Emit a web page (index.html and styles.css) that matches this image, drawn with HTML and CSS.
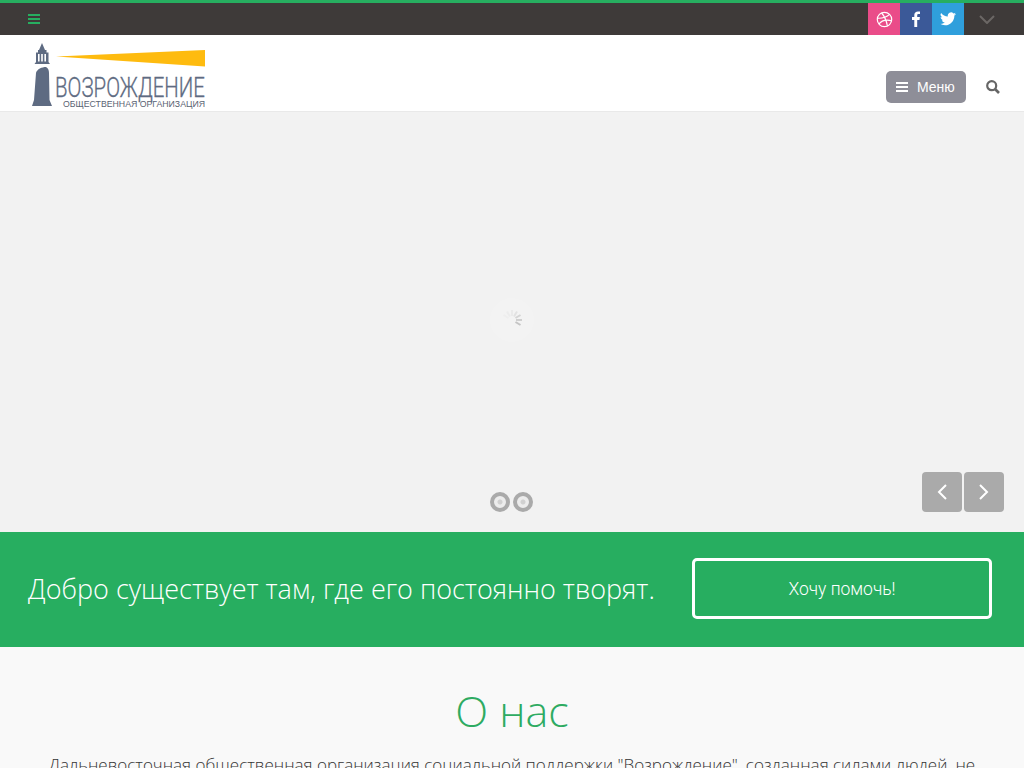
FILE: index.html
```html
<!DOCTYPE html>
<html lang="en">

<head>
    <meta charset="UTF-8">
    <meta name="viewport" content="width=device-width, initial-scale=1.0">
    <title>Возрождение</title>
    <link rel="stylesheet" href="styles.css">
</head>

<body>
    <!-- Top bar -->
    <div class="topbar">
        <svg class="top-burger" width="12" height="10" viewBox="0 0 12 10">
            <rect width="12" height="2" y="0" />
            <rect width="12" height="2" y="4" />
            <rect width="12" height="2" y="8" />
        </svg>
        <div class="socials">
            <a class="social dribbble">
                <svg width="17" height="17" viewBox="0 0 17 17" fill="none" stroke="#fff" stroke-width="1.2">
                    <circle cx="8.5" cy="8.5" r="7.2" />
                    <path d="M5.6 2C8 4.6 10.4 9.6 11.4 15" />
                    <path d="M1.4 7.2C6 7.4 10.4 6.4 13.6 3.4" />
                    <path d="M2.8 13.2C5 10 9.6 8.2 15.6 9.6" />
                </svg>
            </a>
            <a class="social facebook">
                <svg width="9" height="16" viewBox="0.7 0 9 16">
                    <path fill="#fff" d="M5.9 16V8.9h2.3l.4-2.8H5.9V4.4c0-.8.2-1.4 1.4-1.4h1.4V.5C8.4.4 7.6.4 6.700.4 4.600.4 3 1.600 3 4v2.100H.6v2.800H3V16z" />
                </svg>
            </a>
            <a class="social twitter">
                <svg width="16" height="14" viewBox="0 0 24 20">
                    <path fill="#fff" d="M24 2.400a9.800 9.800 0 0 1-2.800.8A4.900 4.900 0 0 0 23.300.5a9.800 9.800 0 0 1-3.100 1.200 4.900 4.900 0 0 0-8.400 4.500A14 14 0 0 1 1.700.9a4.900 4.900 0 0 0 1.500 6.600 4.900 4.900 0 0 1-2.200-.6c0 2.400 1.700 4.400 3.900 4.900a4.900 4.900 0 0 1-2.200.1 4.900 4.900 0 0 0 4.600 3.400A9.900 9.900 0 0 1 0 17.300 14 14 0 0 0 7.500 19.500c9.100 0 14.300-7.700 14-14.600A10 10 0 0 0 24 2.400z" />
                </svg>
            </a>
        </div>
        <svg class="top-chevron" width="16" height="9" viewBox="0 0 16 9" fill="none">
            <path d="M1 1l7 7 7-7" stroke="#6b6765" stroke-width="2" />
        </svg>
    </div>

    <!-- Header -->
    <header class="header">
        <svg class="logo" width="176" height="68" viewBox="0 0 176 68">
            <path fill="#5e6b82" d="M11 0l3 7h1.500v2.500h2v9.500l1.500 2H3.500L5 19V9.500h2V7h1z" />
            <path fill="#fff" d="M7 11h1.600v7.500H7zM10.200 11h1.600v7.500h-1.600zM13.400 11H15v7.500h-1.600z" />
            <path fill="#5e6b82" d="M5 30C6 26 11 24 15 24c2 1 3 3 3 6l.5 27 2.500 6H1l2-6z" />
            <path fill="#febb0f" d="M25 13.500L174 7v16.500z" />
            <text class="logo-name" x="24" y="54" textLength="150" lengthAdjust="spacingAndGlyphs">ВОЗРОЖДЕНИЕ</text>
            <text class="logo-sub" x="32" y="64" textLength="142" lengthAdjust="spacingAndGlyphs">ОБЩЕСТВЕННАЯ ОРГАНИЗАЦИЯ</text>
        </svg>
        <div class="header-right">
            <button class="menu-btn">
                <svg width="12" height="10" viewBox="0 0 12 10" fill="#fff">
                    <rect width="12" height="2" y="0" />
                    <rect width="12" height="2" y="4" />
                    <rect width="12" height="2" y="8" />
                </svg>
                Меню
            </button>
            <svg class="search" width="14" height="14" viewBox="0 0 14 14" fill="none" stroke="#666">
                <circle cx="5.700" cy="5.700" r="4.500" stroke-width="2.200" />
                <path d="M9 9l4 4" stroke-width="2.600" />
            </svg>
        </div>
    </header>

    <!-- Slider -->
    <div class="slider">
        <div class="loader">
            <svg width="24" height="24" viewBox="0 0 24 24" stroke-width="2">
                <path d="M12 2v6" stroke="#eaeaea" />
                <path d="M17 3.500l-3 5" stroke="#e2e2e2" />
                <path d="M20.500 7l-5 3" stroke="#d4d4d4" />
                <path d="M22 12h-6" stroke="#cfcfcf" />
                <path d="M20.500 17l-5-3" stroke="#c4c4c4" />
                <path d="M7 3.500l3 5" stroke="#ececec" />
                <path d="M3.500 7l5 3" stroke="#eeeeee" />
            </svg>
        </div>
        <div class="dots">
            <span class="dot"></span>
            <span class="dot"></span>
        </div>
        <div class="arrows">
            <a class="arrow">
                <svg width="12" height="18" viewBox="0 0 12 18" fill="none">
                    <path d="M10 2L3 9l7 7" />
                </svg>
            </a>
            <a class="arrow">
                <svg width="12" height="18" viewBox="0 0 12 18" fill="none">
                    <path d="M2 2l7 7-7 7" />
                </svg>
            </a>
        </div>
    </div>

    <!-- Call to action -->
    <div class="cta">
        <p class="cta-text">Добро существует там, где его постоянно творят.</p>
        <a class="cta-btn">Хочу помочь!</a>
    </div>

    <!-- About -->
    <section class="about">
        <h2>О нас</h2>
        <p>Дальневосточная общественная организация социальной поддержки "Возрождение", созданная силами людей, не</p>
    </section>
</body>

</html>
```

FILE: styles.css
```css
html, body {
    margin: 0;
    height: 768px;
    overflow: hidden;
}

body {
    font-family: "Open Sans", sans-serif;
    background-color: #f9f9f9;
}

.topbar {
    display: flex;
    align-items: center;
    height: 32px;
    border-top: 3px solid #27ae60;
    background-color: #3e3a39;
}

.top-burger {
    margin-left: 28px;
    fill: #27ae60;
}

.socials {
    display: flex;
    margin-left: auto;
}

.social {
    display: flex;
    align-items: center;
    justify-content: center;
    width: 32px;
    height: 32px;
}

.dribbble {
    background-color: #ea4c89;
}

.facebook {
    background-color: #3b5998;
}

.twitter {
    background-color: #2f9fdc;
}

.top-chevron {
    margin: 0 29px 0 15px;
}

.header {
    display: flex;
    justify-content: space-between;
    height: 76px;
    border-bottom: 1px solid #e9e9e9;
    background-color: #fff;
}

.logo {
    margin: 8px 0 0 31px;
}

.logo-name {
    font-family: Roboto, sans-serif;
    font-size: 27px;
    font-weight: 300;
    fill: #5e6b82;
    stroke: #5e6b82;
    stroke-width: 0.3;
}

.logo-sub {
    font-family: "Liberation Sans", sans-serif;
    font-size: 8.500px;
    fill: #5a6373;
}

.header-right {
    display: flex;
    align-items: center;
    gap: 20px;
    padding: 28px 24px 0 0;
}

.menu-btn {
    display: flex;
    align-items: center;
    gap: 9px;
    width: 80px;
    height: 32px;
    padding: 0 0 0 10px;
    border: 0;
    border-radius: 5px;
    background-color: #8e8e98;
    color: #fff;
    font-family: "Liberation Sans", sans-serif;
    font-size: 14px;
}

.slider {
    position: relative;
    height: 420px;
    background-color: #f2f2f2;
}

.loader {
    position: absolute;
    left: 490px;
    top: 186px;
    display: flex;
    align-items: center;
    justify-content: center;
    width: 44px;
    height: 44px;
    border-radius: 50%;
    background-color: rgba(255, 255, 255, 0.12);
}

.dots {
    position: absolute;
    left: 490px;
    top: 380px;
    display: flex;
    gap: 3px;
}

.dot {
    box-sizing: border-box;
    width: 20px;
    height: 20px;
    border: 4px solid #aaa;
    border-radius: 50%;
    background: radial-gradient(circle, #d0d0d0 0 2px, #ececec 3px);
}

.arrows {
    position: absolute;
    right: 20px;
    top: 360px;
    display: flex;
    gap: 2px;
}

.arrow {
    display: flex;
    align-items: center;
    justify-content: center;
    width: 40px;
    height: 40px;
    border-radius: 4px;
    background-color: #aaa;
}

.arrow path {
    stroke: #fff;
    stroke-width: 2;
}

.cta {
    display: flex;
    align-items: center;
    justify-content: space-between;
    box-sizing: border-box;
    height: 115px;
    padding: 0 32px 2px 28px;
    background-color: #27ae60;
}

.cta-text {
    margin: 0;
    color: #fff;
    font-size: 27px;
    font-weight: 300;
}

.cta-btn {
    box-sizing: border-box;
    display: flex;
    align-items: center;
    justify-content: center;
    width: 300px;
    height: 61px;
    border: 3px solid #fff;
    border-radius: 5px;
    color: #fff;
    font-family: Roboto, sans-serif;
    font-size: 17.500px;
    font-weight: 300;
}

.about {
    padding: 30px 40px 0;
    text-align: center;
}

.about h2 {
    margin: 0;
    color: #2eab62;
    font-size: 43px;
    font-weight: 300;
    line-height: 67px;
}

.about p {
    margin: 9px 0 0;
    color: #333;
    font-size: 17px;
    font-weight: 300;
    white-space: nowrap;
}
```
